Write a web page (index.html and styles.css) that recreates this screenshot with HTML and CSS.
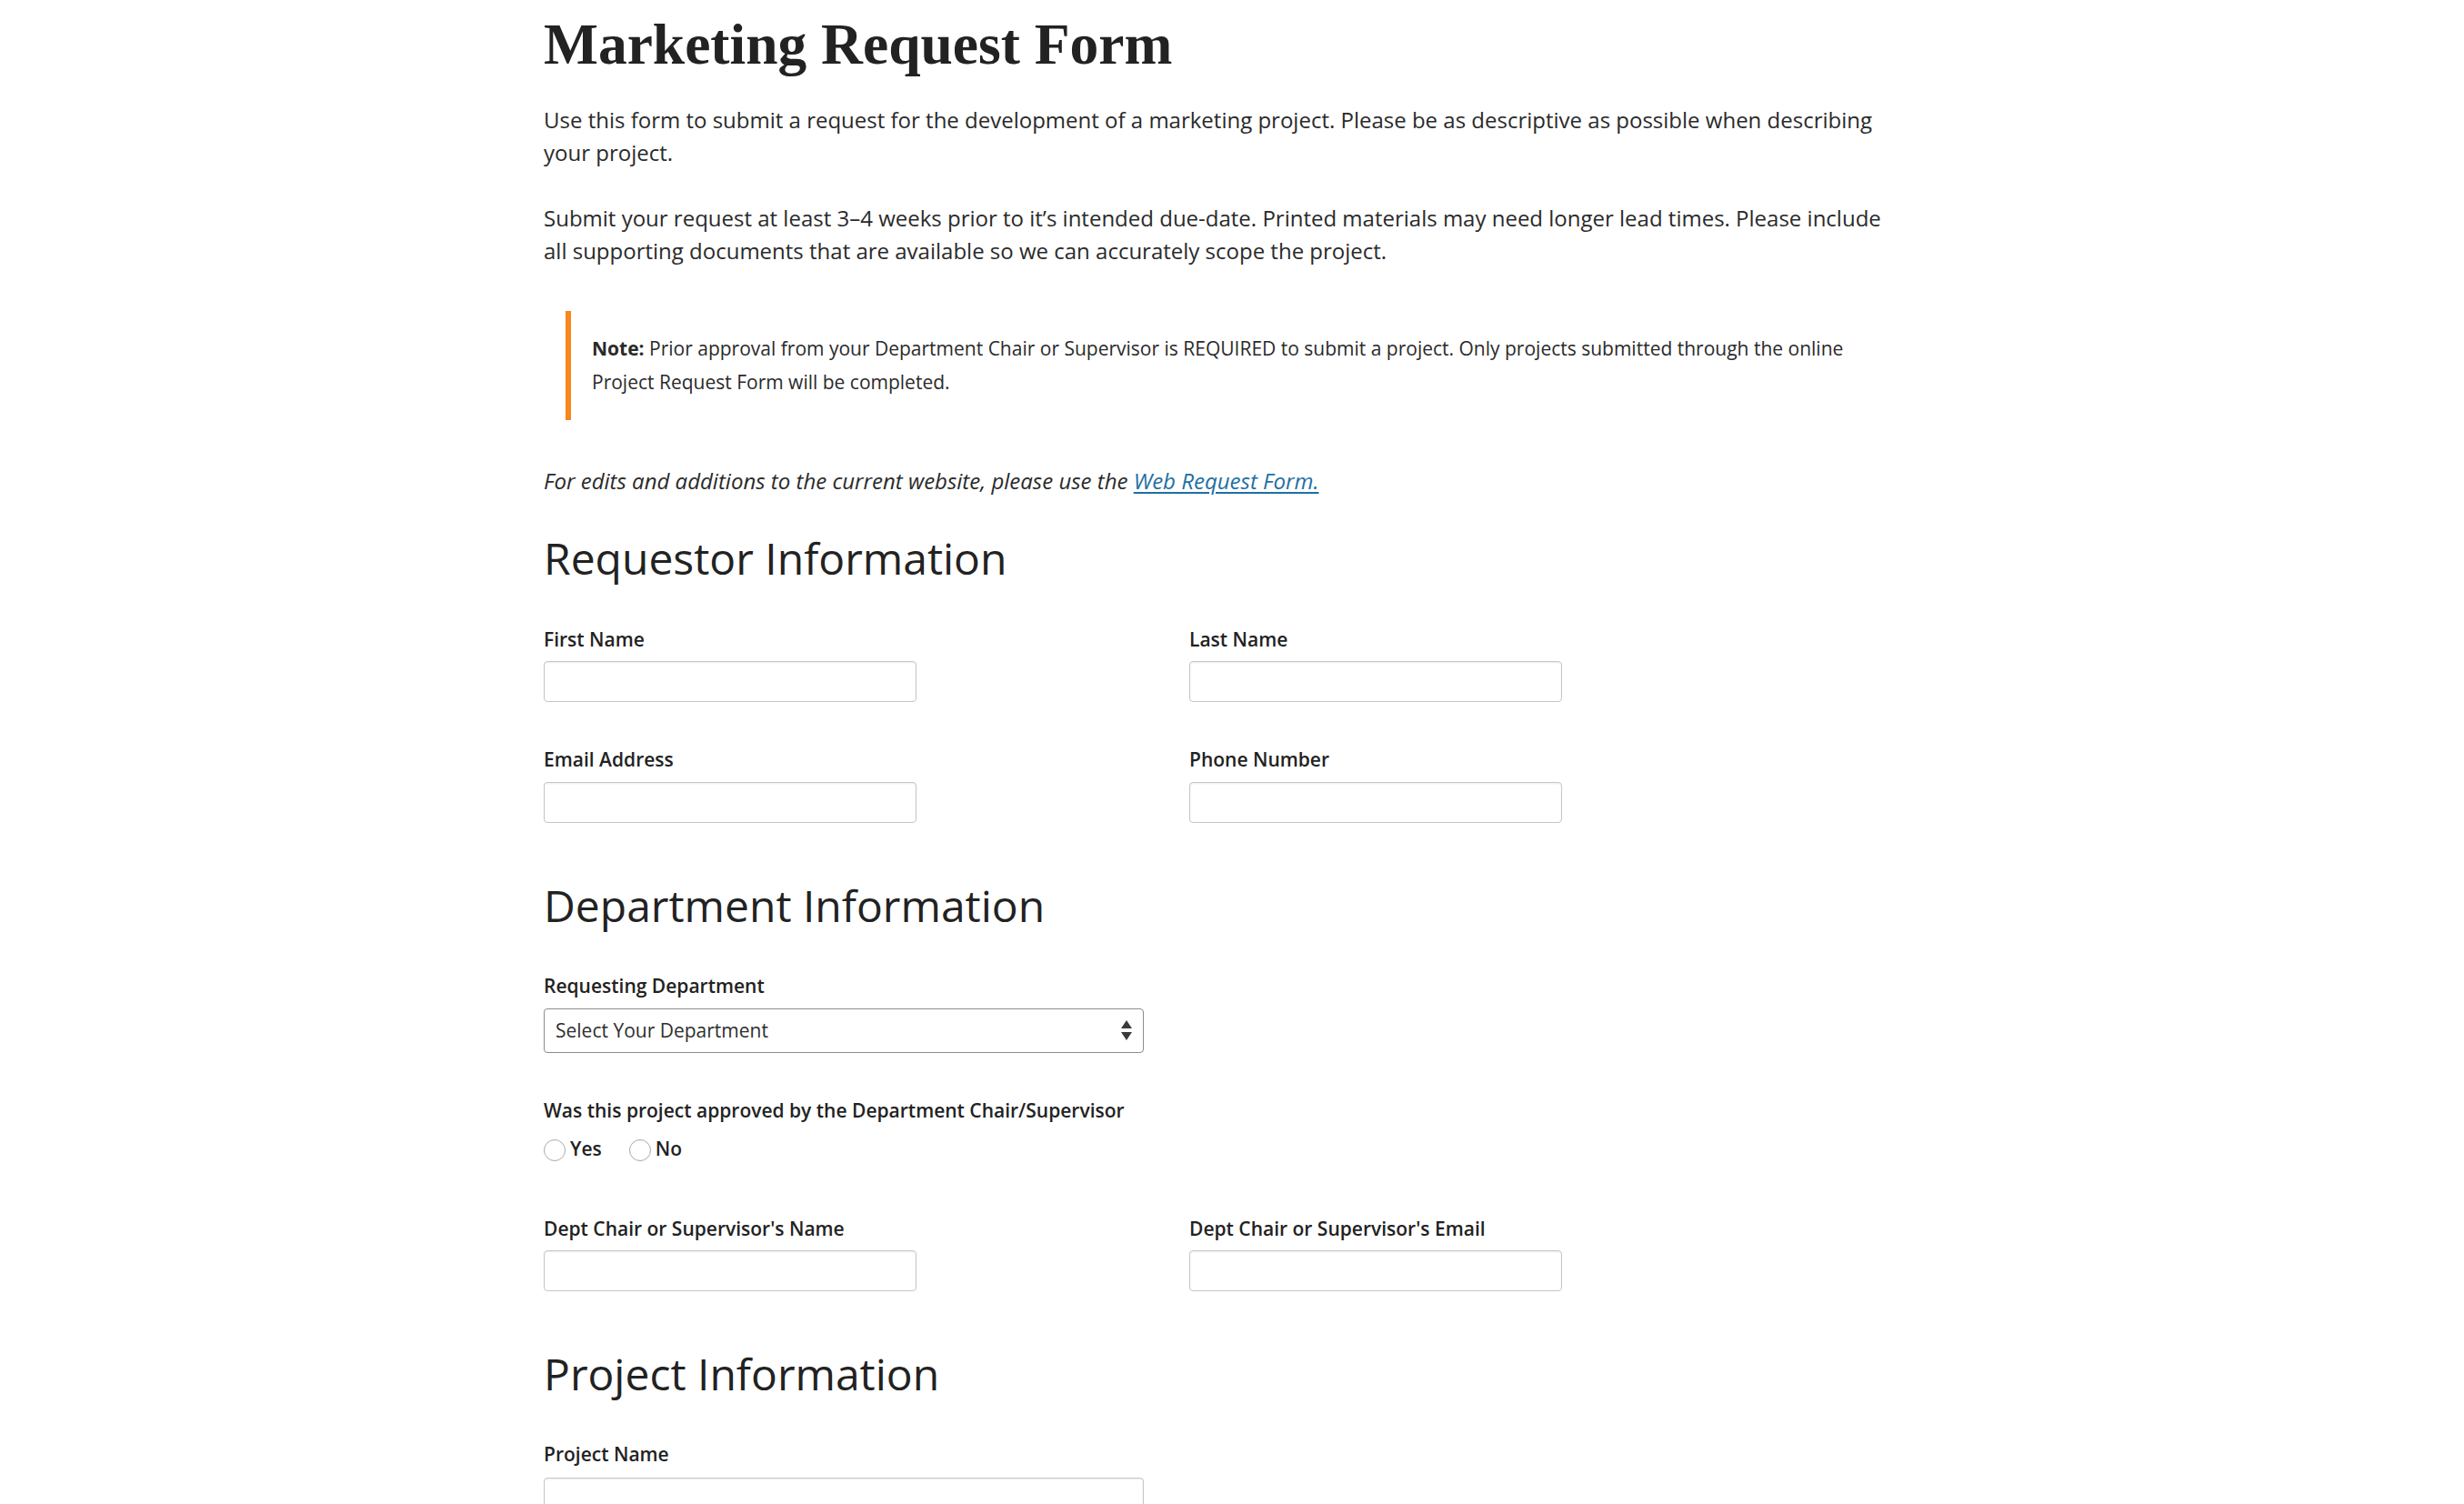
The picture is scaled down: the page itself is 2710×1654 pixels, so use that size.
FILE: index.html
```html
<!DOCTYPE html>
<html lang="en">
<head>
<meta charset="utf-8">
<title>Marketing Request Form</title>
<link rel="stylesheet" href="styles.css">
</head>
<body>
<main class="page">
  <div class="content">
    <h1 class="title">Marketing Request Form</h1>
    <p class="lead">Use this form to submit a request for the development of a marketing project. Please be as descriptive as possible when describing your project.</p>
    <p class="lead lead-second">Submit your request at least 3–4 weeks prior to it’s intended due-date. Printed materials may need longer lead times. Please include all supporting documents that are available so we can accurately scope the project.</p>
    <blockquote class="note">
      <p><strong>Note:</strong> Prior approval from your Department Chair or Supervisor is REQUIRED to submit a project. Only projects submitted through the online Project Request Form will be completed.</p>
    </blockquote>
    <p class="aside"><em>For edits and additions to the current website, please use the <a href="#" class="link">Web Request Form.</a></em></p>

    <form class="form">
      <h2 class="section-title section-first">Requestor Information</h2>
      <div class="row">
        <div class="field"><label class="label">First Name</label><input class="input" type="text"></div>
        <div class="field"><label class="label">Last Name</label><input class="input" type="text"></div>
      </div>
      <div class="row">
        <div class="field"><label class="label">Email Address</label><input class="input" type="text"></div>
        <div class="field"><label class="label">Phone Number</label><input class="input" type="text"></div>
      </div>

      <h2 class="section-title">Department Information</h2>
      <div class="field field-wide">
        <label class="label">Requesting Department</label>
        <div class="select-wrap">
          <select class="select"><option>Select Your Department</option></select>
          <svg class="select-arrows" width="12" height="24" viewBox="0 0 12 24"><path d="M6 1 L12 10 L0 10 Z" fill="#3a3a3a"/><path d="M0 14 L12 14 L6 23 Z" fill="#3a3a3a"/></svg>
        </div>
      </div>
      <div class="field field-radio">
        <span class="label">Was this project approved by the Department Chair/Supervisor</span>
        <div class="radios">
          <label class="radio"><input type="radio" name="approved" class="radio-input"><span>Yes</span></label>
          <label class="radio"><input type="radio" name="approved" class="radio-input"><span>No</span></label>
        </div>
      </div>
      <div class="row">
        <div class="field"><label class="label">Dept Chair or Supervisor's Name</label><input class="input" type="text"></div>
        <div class="field"><label class="label">Dept Chair or Supervisor's Email</label><input class="input" type="text"></div>
      </div>

      <h2 class="section-title section-last">Project Information</h2>
      <div class="field field-wide">
        <label class="label label-project">Project Name</label>
        <input class="input input-wide" type="text">
      </div>
    </form>
  </div>
</main>
</body>
</html>
```

FILE: styles.css
```css
html, body {
  margin: 0;
  padding: 0;
  background: #ffffff;
}
body {
  font-family: "Open Sans", "Liberation Sans", sans-serif;
  color: #2a2a2a;
  font-size: 24px;
  line-height: 36px;
}
.page {
  width: 1514px;
  margin: 0 auto;
  padding-bottom: 200px;
}
.content {
  padding-right: 20px;
}
.title {
  font-family: "Liberation Serif", "Times New Roman", serif;
  font-weight: 700;
  font-size: 63.5px;
  line-height: 76px;
  margin: 0;
  padding-top: 11px;
  color: #222222;
}
.lead {
  margin: 27px 0 0;
}
.lead-second {
  margin-top: 36px;
}
.note {
  margin: 48px 24px 0;
  border-left: 6px solid #f7861c;
  padding: 23px 24px 24px 23px;
}
.note p {
  margin: 0;
  font-size: 21px;
  line-height: 36.5px;
}
.note strong {
  font-weight: 700;
}
.aside {
  margin: 49px 0 0;
}
.link {
  color: #1f6fa3;
  text-decoration: underline;
  text-underline-offset: 3px;
}
.form {
  margin: 0;
}
.section-title {
  font-size: 48px;
  font-weight: 400;
  line-height: 57.6px;
  margin: 62px 0 45px;
  color: #222222;
}
.section-first {
  margin-top: 38px;
}
.section-last {
  margin-top: 62px;
  margin-bottom: 44px;
}
.row {
  display: grid;
  grid-template-columns: 710px 710px;
  margin-bottom: 48px;
}
.row:last-of-type {
  margin-bottom: 0;
}
.field {
  display: flex;
  flex-direction: column;
  align-items: flex-start;
}
.field-wide {
  margin-bottom: 48px;
}
.label {
  font-size: 21px;
  line-height: 31.5px;
  font-weight: 600;
  color: #222222;
  margin-bottom: 8px;
}
.label-project {
  margin-bottom: 10px;
}
.input {
  box-sizing: border-box;
  width: 410px;
  height: 45px;
  border: 1px solid #c6c6c6;
  border-radius: 4px;
  box-shadow: inset 0 1px 2px rgba(0, 0, 0, 0.08);
  background: #ffffff;
  margin: 0;
  padding: 0 12px;
  font-family: inherit;
  font-size: 21px;
}
.input-wide {
  width: 660px;
}
.select-wrap {
  position: relative;
  width: 660px;
}
.select {
  -webkit-appearance: none;
  appearance: none;
  box-sizing: border-box;
  width: 660px;
  height: 49px;
  border: 1px solid #8c8c8c;
  border-radius: 4px;
  background: #ffffff;
  padding: 0 40px 0 12px;
  margin: 0;
  font-family: "Open Sans", "Liberation Sans", sans-serif;
  font-size: 21px;
  color: #2e2e2e;
}
.select-arrows {
  position: absolute;
  right: 13px;
  top: 12px;
  pointer-events: none;
}
.field-radio {
  margin-bottom: 56px;
}
.field-radio .label {
  margin-bottom: 11px;
}
.radios {
  display: flex;
  gap: 30px;
}
.radio {
  display: flex;
  align-items: center;
  gap: 5px;
  font-size: 21px;
  line-height: 31.5px;
  font-weight: 600;
  color: #222222;
}
.radio-input {
  -webkit-appearance: none;
  appearance: none;
  box-sizing: border-box;
  width: 24px;
  height: 24px;
  margin: 3px 0 0;
  border: 1px solid #a9a9a9;
  border-radius: 50%;
  background: #ffffff;
}
```
